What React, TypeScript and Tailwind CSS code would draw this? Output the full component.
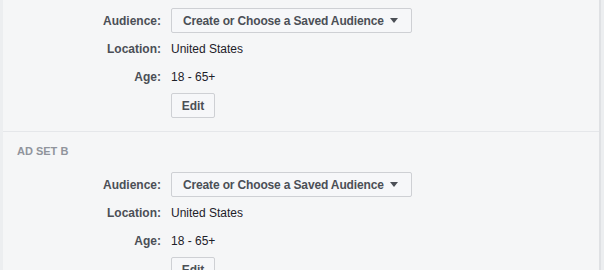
import React from 'react';

// Facebook-style ad set audience editor, scrolled so the first set's header is above the fold.

const SETS = ['AD SET A', 'AD SET B'];

const Caret = () => (
  <svg width="8" height="5" viewBox="0 0 8 5" className="ml-[6px]">
    <polygon points="0,0 8,0 4,5" fill="#4b4f56" />
  </svg>
);

const label = 'w-[144px] shrink-0 text-right font-bold text-[#4b4f56]';

const AdSet: React.FC<{ name: string; first?: boolean }> = ({ name, first }) => (
  <section className={`px-[14px] pt-[12px] pb-[13px] ${first ? '' : 'border-t border-[#e5e7ea]'}`}>
    <p className="mb-[14px] h-[14px] text-[11px] leading-[14px] font-bold text-[#90949c]">{name}</p>
    <div className="flex flex-col text-[12px]">
      <div className="flex h-[25px] items-center gap-[10px]">
        <span className={label}>Audience:</span>
        <button className="flex h-[25px] w-[241px] items-center rounded-[2px] border border-[#ced0d4] bg-[#f6f7f9] pl-[11px] text-[12px] font-bold tracking-[-0.15px] text-[#4b4f56]">
          Create or Choose a Saved Audience
          <Caret />
        </button>
      </div>

      <div className="mt-[4px] flex h-[24px] items-center gap-[10px]">
        <span className={label}>Location:</span>
        <span className="text-[#1d2129]">United States</span>
      </div>

      <div className="mt-[4px] flex h-[23px] items-center gap-[10px]">
        <span className={label}>Age:</span>
        <span className="text-[#1d2129]">18 - 65+</span>
      </div>

      <div className="mt-[5px] flex h-[25px] items-center gap-[10px]">
        <span className="w-[144px] shrink-0" />
        <button className="h-[25px] w-[44px] rounded-[2px] border border-[#ced0d4] bg-[#f6f7f9] text-[12px] font-bold text-[#4b4f56]">
          Edit
        </button>
      </div>
    </div>
  </section>
);

export default function App() {
  return (
    <div
      className="flex h-[270px] w-[604px] overflow-hidden bg-[#f5f6f7]"
      style={{ fontFamily: '"Liberation Sans", Arial, sans-serif' }}
    >
      <div className="w-[3px] shrink-0 bg-[#eceef0]" />
      <div className="flex-1">
        <div className="-mt-[32px]">
          {SETS.map((s, i) => (
            <AdSet key={s} name={s} first={i === 0} />
          ))}
        </div>
      </div>
      <div className="w-[2px] shrink-0 bg-[#dfe1e4]" />
      <div className="w-[3px] shrink-0 bg-[#eceef0]" />
    </div>
  );
}
